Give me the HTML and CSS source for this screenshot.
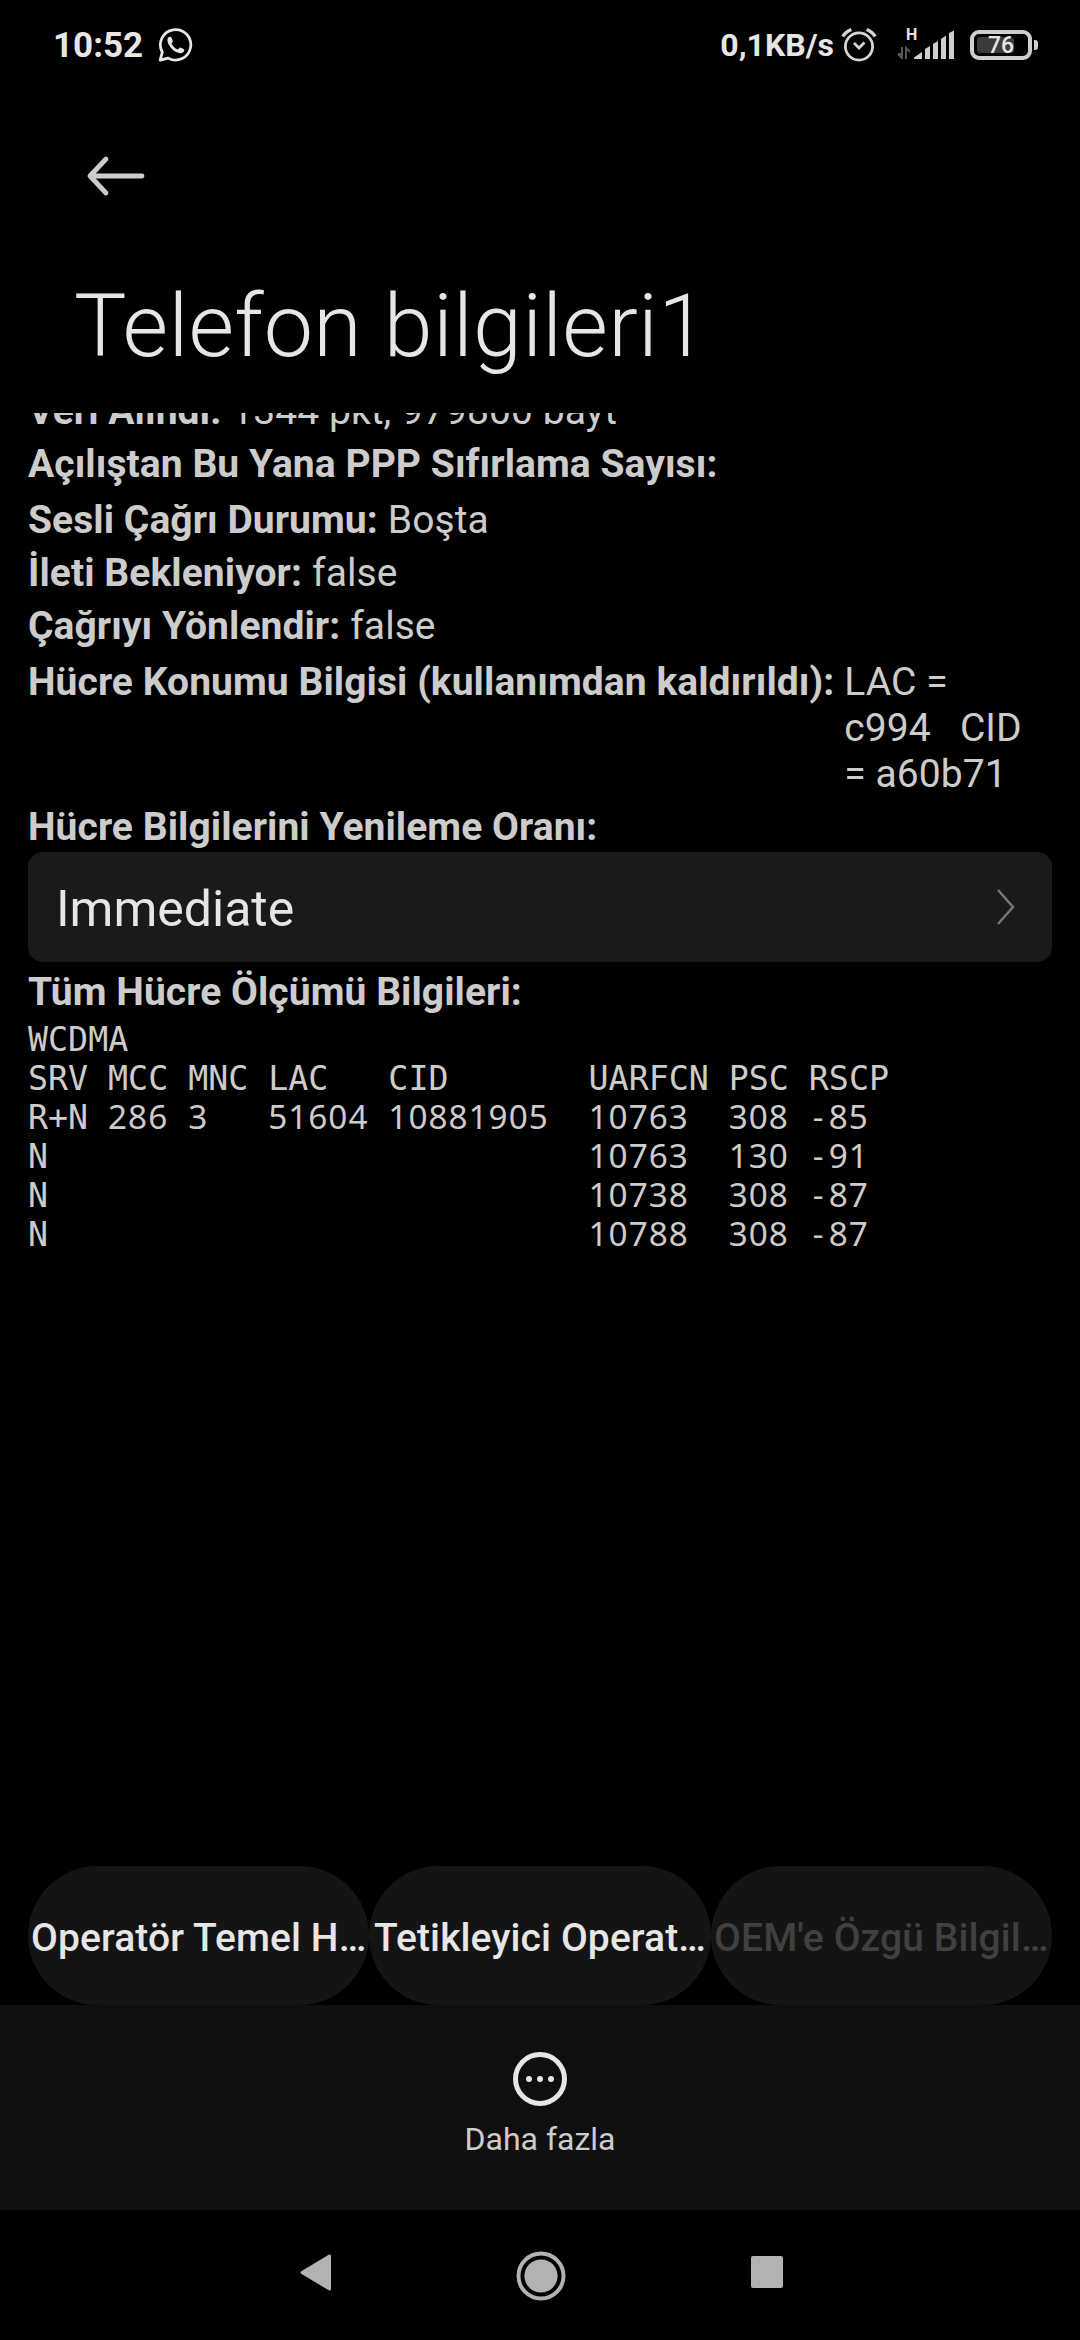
FILE: index.html
```html
<!DOCTYPE html>
<html lang="tr">
<head>
    <meta charset="UTF-8">
    <meta name="viewport" content="width=device-width, initial-scale=1.0">
    <title>Telefon bilgileri1</title>
    <link rel="stylesheet" href="styles.css">
</head>
<body>
    <div class="status-bar">
        <span class="clock">10:52</span>
        <svg class="whatsapp" width="36" height="36" viewBox="0 0 36 36">
            <path d="M2.2 33.2 L4.3 25.2 A15.2 15.2 0 1 1 10.2 31.1 Z" fill="none" stroke="#e6e6e6" stroke-width="2.8" stroke-linejoin="round"/>
            <path d="M10.2 10.6 C11 9.6 12.8 9.4 13.3 10.4 L14.8 13.9 C15 14.7 13.6 15.7 13.4 16.5 C14.5 19 17 21.4 19.8 22.4 C20.7 22.2 21.5 20.4 22.4 20.6 L26 22.3 C26.8 23 25.8 25 24.7 25.6 C21.6 27.1 17.6 25.4 14.5 22.6 C11.5 19.8 7.8 14 10.2 10.6 Z" fill="#e6e6e6"/>
        </svg>
        <span class="speed">0,1KB/s</span>
        <svg class="alarm" width="36" height="36" viewBox="0 0 36 36" fill="none" stroke="#d4d4d4" stroke-width="2.8">
            <circle cx="18" cy="19.5" r="13.6"/>
            <path d="M13 16 L18 21 L23.5 15.5"/>
            <path d="M1.8 9.5 Q4.5 5 10.3 2.5 M34.2 9.5 Q31.5 5 25.7 2.5" stroke-width="3.4"/>
        </svg>
        <div class="signal">
            <span class="network">H</span>
            <svg width="58" height="32" viewBox="0 0 58 32">
                <path d="M1 26 H5 M5 19 V31 M1 26 L5 30" fill="none" stroke="#555" stroke-width="2"/>
                <path d="M9 31 V20 L13 24" fill="none" stroke="#555" stroke-width="2"/>
                <path d="M17 31 V29.5 L25 24 V31 Z M28 31 V21 L33 18 V31 Z M36 31 V16 L41 13 V31 Z M44 31 V11 L49 7.5 V31 Z M52 31 V5 L57 2.5 V31 Z" fill="#cfcfcf"/>
            </svg>
        </div>
        <div class="battery">
            <div class="battery-body">
                <div class="battery-level"></div>
                <span>76</span>
            </div>
            <div class="battery-tip"></div>
        </div>
    </div>

    <header>
        <svg class="back" width="60" height="42" viewBox="0 0 60 42" fill="none" stroke="#cccccc" stroke-width="4.8" stroke-linecap="round" stroke-linejoin="round">
            <path d="M56 21 H4 M20 4 L4 21 L20 38"/>
        </svg>
        <h1>Telefon bilgileri1</h1>
    </header>

    <main>
        <div class="row cut"><b>Veri Alındı:</b><span>1344 pkt, 979800 bayt</span></div>
        <div class="row"><b>Açılıştan Bu Yana PPP Sıfırlama Sayısı:</b></div>
        <div class="row wide"><b>Sesli Çağrı Durumu:</b><span>Boşta</span></div>
        <div class="row"><b>İleti Bekleniyor:</b><span>false</span></div>
        <div class="row"><b>Çağrıyı Yönlendir:</b><span>false</span></div>
        <div class="row wide"><b>Hücre Konumu Bilgisi (kullanımdan kaldırıldı):</b><span>LAC =<br>c994&nbsp;&nbsp; CID<br>= a60b71</span></div>
        <div class="row"><b>Hücre Bilgilerini Yenileme Oranı:</b></div>

        <div class="select">
            <span>Immediate</span>
            <svg width="20" height="38" viewBox="0 0 20 38" fill="none" stroke="#777" stroke-width="2.5">
                <path d="M2 2 L17 19 L2 36"/>
            </svg>
        </div>

        <div class="row"><b>Tüm Hücre Ölçümü Bilgileri:</b></div>

        <table>
            <tr><th class="c4">WCDMA</th><th class="c4"></th><th class="c4"></th><th class="c6"></th><th class="c10"></th><th class="c7"></th><th class="c4"></th><th class="c4"></th></tr>
            <tr><th>SRV</th><th>MCC</th><th>MNC</th><th>LAC</th><th>CID</th><th>UARFCN</th><th>PSC</th><th>RSCP</th></tr>
            <tr><th>R+N</th><td>286</td><td>3</td><td>51604</td><td>10881905</td><td>10763</td><td>308</td><td><i>-</i>85</td></tr>
            <tr><th>N</th><td></td><td></td><td></td><td></td><td>10763</td><td>130</td><td><i>-</i>91</td></tr>
            <tr><th>N</th><td></td><td></td><td></td><td></td><td>10738</td><td>308</td><td><i>-</i>87</td></tr>
            <tr><th>N</th><td></td><td></td><td></td><td></td><td>10788</td><td>308</td><td><i>-</i>87</td></tr>
        </table>
    </main>

    <div class="buttons">
        <button>Operatör Temel H…</button>
        <button>Tetikleyici Operat…</button>
        <button disabled>OEM'e Özgü Bilgil…</button>
    </div>

    <div class="more">
        <svg width="54" height="54" viewBox="0 0 54 54">
            <circle cx="27" cy="27" r="24.5" fill="none" stroke="#e6e6e6" stroke-width="5"/>
            <circle cx="16" cy="27" r="3" fill="#e6e6e6"/>
            <circle cx="27" cy="27" r="3" fill="#e6e6e6"/>
            <circle cx="38" cy="27" r="3" fill="#e6e6e6"/>
        </svg>
        <span>Daha fazla</span>
    </div>

    <nav>
        <svg class="nav-back" width="31" height="37" viewBox="0 0 31 37">
            <path d="M2 18.5 L29.5 2 V35 Z" fill="#b2b2b2" stroke="#b2b2b2" stroke-width="3" stroke-linejoin="round"/>
        </svg>
        <svg class="nav-home" width="50" height="50" viewBox="0 0 50 50">
            <circle cx="25" cy="25" r="22.5" fill="none" stroke="#b2b2b2" stroke-width="4"/>
            <circle cx="25" cy="25" r="16.6" fill="#b2b2b2"/>
        </svg>
        <div class="nav-recent"></div>
    </nav>
</body>
</html>
```
FILE: styles.css
```css
* {
    box-sizing: border-box;
}

body {
    font-family: Roboto, sans-serif;
    margin: 0;
    width: 1080px;
    height: 2340px;
    display: flex;
    flex-direction: column;
    overflow: hidden;
    background-color: #000;
    color: #cccccc;
}

svg {
    display: block;
    flex: none;
}

/* Status bar */
.status-bar {
    display: flex;
    align-items: flex-start;
    height: 90px;
    padding: 27px 42px 0 53px;
    color: #e6e6e6;
    font-weight: bold;
    white-space: nowrap;
}

.clock {
    width: 105px;
    font-size: 35px;
    line-height: 37px;
}

.speed {
    margin-left: auto;
    font-size: 32px;
    line-height: 37px;
}

.alarm {
    margin-left: 7px;
}

.signal {
    position: relative;
    margin: 1px 15px 0 20px;
}

.network {
    position: absolute;
    left: 9px;
    top: -1px;
    font-size: 16px;
    line-height: 16px;
}

.battery {
    display: flex;
    align-items: center;
    gap: 2px;
    margin-top: 3px;
}

.battery-body {
    position: relative;
    width: 62px;
    height: 30px;
    padding: 3px;
    border: 4px solid #cfcfcf;
    border-radius: 9px;
}

.battery-level {
    width: 37px;
    height: 16px;
    border-radius: 3px;
    background-color: #3b3b3b;
}

.battery-body span {
    position: absolute;
    left: 14px;
    top: 0;
    font-size: 23px;
    font-weight: 500;
    line-height: 23px;
}

.battery-tip {
    width: 4px;
    height: 10px;
    border-radius: 0 3px 3px 0;
    background-color: #cfcfcf;
}

/* Title area */
header {
    height: 323px;
    padding: 65px 74px 0;
}

.back {
    margin-left: 12px;
}

h1 {
    margin: 77px 0 0;
    font-size: 88px;
    font-weight: 300;
    line-height: 103px;
    letter-spacing: 0.3px;
    color: #e6e6e6;
}

/* Scrolled info list */
main {
    height: 1453px;
    padding: 0 28px;
    overflow: hidden;
    font-size: 39px;
    line-height: 46px;
}

.row {
    display: flex;
    gap: 10px;
    margin-top: 7px;
    white-space: nowrap;
    letter-spacing: 0.06px;
}

.row.wide {
    margin-top: 10px;
}

.row.cut {
    margin-top: -25px;
}

.select {
    display: flex;
    align-items: center;
    justify-content: space-between;
    height: 110px;
    margin-top: 2px;
    padding: 0 36px 0 28px;
    border-radius: 15px;
    background-color: #1a1a1a;
    color: #e6e6e6;
    font-size: 50px;
}

.select span {
    padding-top: 3px;
}

/* Cell measurements */
table {
    table-layout: fixed;
    width: 861px;
    margin-top: 5px;
    border-collapse: collapse;
    font-size: 33.3px;
    line-height: 39px;
}

tr {
    height: 39px;
}

th,
td {
    padding: 0;
    text-align: left;
    vertical-align: top;
    white-space: nowrap;
}

th {
    font-family: "Droid Sans Mono", "DejaVu Sans Mono", monospace;
    font-size: 33.3px;
    font-weight: normal;
}

td {
    font-family: "Noto Sans", sans-serif;
    line-height: 37px;
    letter-spacing: 1px;
}

td i {
    display: inline-block;
    width: 20px;
    padding-left: 4px;
    font-style: normal;
}

.c4 {
    width: 80px;
}

.c6 {
    width: 120px;
}

.c7 {
    width: 140px;
}

.c10 {
    width: 200px;
}

/* Buttons */
.buttons {
    display: grid;
    grid-template-columns: repeat(3, 1fr);
    height: 139px;
    padding: 0 28px;
}

button {
    padding: 5px 0 0;
    border: none;
    border-radius: 70px;
    background-color: #141414;
    color: #e6e6e6;
    font-family: Roboto, sans-serif;
    font-size: 39px;
    font-weight: 500;
    letter-spacing: 0.1px;
    white-space: nowrap;
}

button:disabled {
    color: #404040;
}

.more {
    display: flex;
    flex-direction: column;
    align-items: center;
    height: 205px;
    padding-top: 47px;
    background-color: #0f0f0f;
    font-size: 32px;
    line-height: 38px;
}

.more span {
    margin-top: 14px;
}

/* Navigation keys */
nav {
    display: flex;
    justify-content: space-between;
    height: 130px;
    padding: 41px 297px 0 300px;
}

.nav-back {
    margin-top: 3px;
}

.nav-recent {
    width: 32px;
    height: 32px;
    margin-top: 5px;
    border-radius: 2px;
    background-color: #b2b2b2;
}
```
